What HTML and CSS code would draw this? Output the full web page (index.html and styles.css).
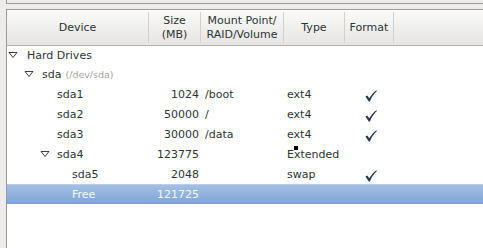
FILE: index.html
```html
<!DOCTYPE html>
<html>
<head>
    <title>Partitions</title>
    <link rel="stylesheet" href="styles.css">
</head>
<body>
    <div class="topbox"></div>
    <div class="frame">
        <div class="head">
            <div class="hc c-dev">Device</div>
            <div class="hc c-size">Size<br>(MB)</div>
            <div class="hc c-mnt">Mount Point/<br>RAID/Volume</div>
            <div class="hc c-type">Type</div>
            <div class="hc c-fmt">Format</div>
        </div>

        <div class="row first">
            <div class="dev l0"><svg class="tw" width="10" height="6"><polygon points="1,0.5 9,0.5 5,5.5" /></svg><span>Hard Drives</span></div>
            <div></div><div></div><div></div><div></div>
        </div>
        <div class="row">
            <div class="dev l1"><svg class="tw" width="10" height="6"><polygon points="1,0.5 9,0.5 5,5.5" /></svg><span>sda</span><span class="path">(/dev/sda)</span></div>
            <div></div><div></div><div></div><div></div>
        </div>
        <div class="row">
            <div class="dev l2">sda1</div>
            <div class="size">1024</div>
            <div class="mnt">/boot</div>
            <div class="type">ext4</div>
            <div class="fmt"><svg class="chk" width="12" height="12"><path d="M0.4,6.6 L2.2,5.6 L4.3,8.3 C6.2,5.2 8.6,2.2 11.5,0.3 L11.9,0.9 C9.2,3.2 6.6,6.8 4.9,11.6 L3.8,11.6 Z" /></svg></div>
        </div>
        <div class="row">
            <div class="dev l2">sda2</div>
            <div class="size">50000</div>
            <div class="mnt">/</div>
            <div class="type">ext4</div>
            <div class="fmt"><svg class="chk" width="12" height="12"><path d="M0.4,6.6 L2.2,5.6 L4.3,8.3 C6.2,5.2 8.6,2.2 11.5,0.3 L11.9,0.9 C9.2,3.2 6.6,6.8 4.9,11.6 L3.8,11.6 Z" /></svg></div>
        </div>
        <div class="row">
            <div class="dev l2">sda3</div>
            <div class="size">30000</div>
            <div class="mnt">/data</div>
            <div class="type">ext4</div>
            <div class="fmt"><svg class="chk" width="12" height="12"><path d="M0.4,6.6 L2.2,5.6 L4.3,8.3 C6.2,5.2 8.6,2.2 11.5,0.3 L11.9,0.9 C9.2,3.2 6.6,6.8 4.9,11.6 L3.8,11.6 Z" /></svg></div>
        </div>
        <div class="row">
            <div class="dev l2x"><svg class="tw" width="10" height="6"><polygon points="1,0.5 9,0.5 5,5.5" /></svg><span>sda4</span></div>
            <div class="size">123775</div>
            <div class="mnt"></div>
            <div class="type">Extended</div>
            <div class="fmt"></div>
        </div>
        <div class="row">
            <div class="dev l3">sda5</div>
            <div class="size">2048</div>
            <div class="mnt"></div>
            <div class="type">swap</div>
            <div class="fmt"><svg class="chk" width="12" height="12"><path d="M0.4,6.6 L2.2,5.6 L4.3,8.3 C6.2,5.2 8.6,2.2 11.5,0.3 L11.9,0.9 C9.2,3.2 6.6,6.8 4.9,11.6 L3.8,11.6 Z" /></svg></div>
        </div>
        <div class="row selected">
            <div class="dev l3">Free</div>
            <div class="size">121725</div>
            <div class="mnt"></div>
            <div class="type"></div>
            <div class="fmt"></div>
        </div>
    </div>
    <div class="pointer"></div>
</body>
</html>
```

FILE: styles.css
```css
body{
    margin: 0;
    background: #edeceb;
    font-family: "DejaVu Sans", sans-serif;
    font-size: 11px;
    color: #2e3436;
    height: 248px;
    overflow: hidden;
}
.topbox{
    margin-left: 6px;
    height: 3px;
    border-left: 1px solid #9e9c98;
    border-bottom: 1px solid #9e9c98;
}
.frame{
    margin-top: 5px;
    margin-left: 6px;
    border-top: 1px solid #9e9c98;
    border-left: 1px solid #9e9c98;
    background: #fff;
    height: 240px;
}
.head{
    display: flex;
    align-items: center;
    height: 35px;
    border-bottom: 1px solid #b5b3af;
    background: linear-gradient(#fbfbfa, #e5e4e2);
}
.hc{
    box-sizing: border-box;
    height: 31px;
    display: flex;
    align-items: center;
    justify-content: center;
    text-align: center;
    line-height: 14px;
    border-right: 1px solid #d2d0cd;
}
.c-dev{ width: 142px; }
.c-size{ width: 52px; }
.c-mnt{ width: 83px; }
.c-type{ width: 61px; }
.c-fmt{ width: 49px; }

.row{
    display: grid;
    grid-template-columns: 142px 52px 83px 61px 49px;
    height: 20px;
    align-items: center;
}
.row.first{ height: 18px; }
.dev{
    display: flex;
    align-items: center;
}
.tw{
    flex: none;
}
.tw polygon{
    fill: #fff;
    stroke: #3a3f41;
    stroke-width: 1;
}
.l0{ padding-left: 1px; }
.l0 .tw{ margin-right: 9px; }
.l1{ padding-left: 17px; }
.l1 .tw{ margin-right: 8px; }
.l2{ padding-left: 50px; }
.l2x{ padding-left: 33px; }
.l2x .tw{ margin-right: 7px; }
.l3{ padding-left: 65px; }
.path{
    margin-left: 4px;
    font-size: 9.5px;
    color: #a3a3a3;
}
.size{
    text-align: right;
    padding-right: 2px;
}
.mnt{ padding-left: 4px; }
.type{ padding-left: 3px; }
.fmt{
    display: flex;
    justify-content: center;
    padding-left: 2px;
    padding-top: 3px;
}
.chk path{
    fill: #2b3552;
}
.selected{
    background: linear-gradient(#a3bfe4, #7ea4d5);
    border-top: 1px solid #b9cdea;
    box-sizing: border-box;
    color: #f4f7fb;
}
.pointer{
    position: absolute;
    left: 294px;
    top: 146px;
    width: 4px;
    height: 4px;
    background: #000;
}
```
